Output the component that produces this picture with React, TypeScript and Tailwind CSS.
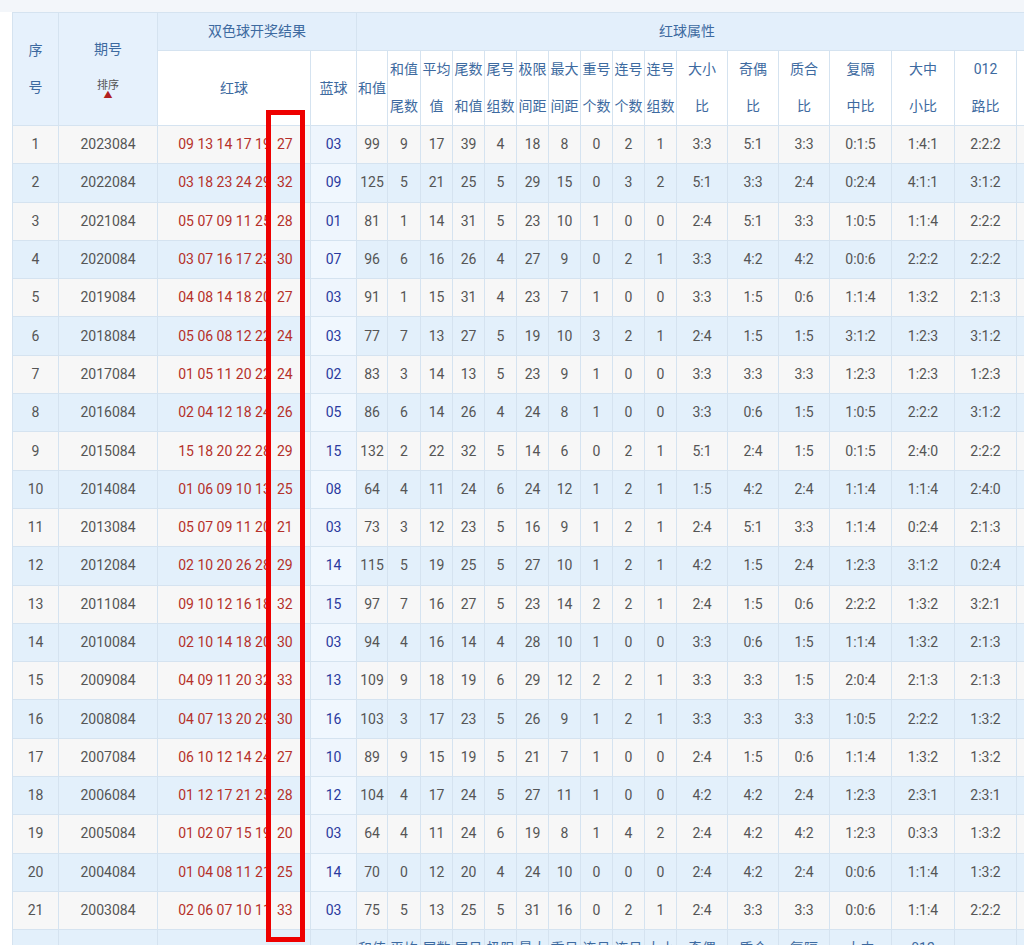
import React from "react";

const rows: string[] = [
"1 2023084 09_13_14_17_19 27 03 99 9 17 39 4 18 8 0 2 1 3:3 5:1 3:3 0:1:5 1:4:1 2:2:2",
"2 2022084 03_18_23_24_29 32 09 125 5 21 25 5 29 15 0 3 2 5:1 3:3 2:4 0:2:4 4:1:1 3:1:2",
"3 2021084 05_07_09_11_25 28 01 81 1 14 31 5 23 10 1 0 0 2:4 5:1 3:3 1:0:5 1:1:4 2:2:2",
"4 2020084 03_07_16_17_23 30 07 96 6 16 26 4 27 9 0 2 1 3:3 4:2 4:2 0:0:6 2:2:2 2:2:2",
"5 2019084 04_08_14_18_20 27 03 91 1 15 31 4 23 7 1 0 0 3:3 1:5 0:6 1:1:4 1:3:2 2:1:3",
"6 2018084 05_06_08_12_22 24 03 77 7 13 27 5 19 10 3 2 1 2:4 1:5 1:5 3:1:2 1:2:3 3:1:2",
"7 2017084 01_05_11_20_22 24 02 83 3 14 13 5 23 9 1 0 0 3:3 3:3 3:3 1:2:3 1:2:3 1:2:3",
"8 2016084 02_04_12_18_24 26 05 86 6 14 26 4 24 8 1 0 0 3:3 0:6 1:5 1:0:5 2:2:2 3:1:2",
"9 2015084 15_18_20_22_28 29 15 132 2 22 32 5 14 6 0 2 1 5:1 2:4 1:5 0:1:5 2:4:0 2:2:2",
"10 2014084 01_06_09_10_13 25 08 64 4 11 24 6 24 12 1 2 1 1:5 4:2 2:4 1:1:4 1:1:4 2:4:0",
"11 2013084 05_07_09_11_20 21 03 73 3 12 23 5 16 9 1 2 1 2:4 5:1 3:3 1:1:4 0:2:4 2:1:3",
"12 2012084 02_10_20_26_28 29 14 115 5 19 25 5 27 10 1 2 1 4:2 1:5 2:4 1:2:3 3:1:2 0:2:4",
"13 2011084 09_10_12_16_18 32 15 97 7 16 27 5 23 14 2 2 1 2:4 1:5 0:6 2:2:2 1:3:2 3:2:1",
"14 2010084 02_10_14_18_20 30 03 94 4 16 14 4 28 10 1 0 0 3:3 0:6 1:5 1:1:4 1:3:2 2:1:3",
"15 2009084 04_09_11_20_32 33 13 109 9 18 19 6 29 12 2 2 1 3:3 3:3 1:5 2:0:4 2:1:3 2:1:3",
"16 2008084 04_07_13_20_29 30 16 103 3 17 23 5 26 9 1 2 1 3:3 3:3 3:3 1:0:5 2:2:2 1:3:2",
"17 2007084 06_10_12_14_24 27 10 89 9 15 19 5 21 7 1 0 0 2:4 1:5 0:6 1:1:4 1:3:2 1:3:2",
"18 2006084 01_12_17_21_25 28 12 104 4 17 24 5 27 11 1 0 0 4:2 4:2 2:4 1:2:3 2:3:1 2:3:1",
"19 2005084 01_02_07_15_19 20 03 64 4 11 24 6 19 8 1 4 2 2:4 4:2 4:2 1:2:3 0:3:3 1:3:2",
"20 2004084 01_04_08_11_21 25 14 70 0 12 20 4 24 10 0 0 0 2:4 4:2 2:4 0:0:6 1:1:4 1:3:2",
"21 2003084 02_06_07_10_11 33 03 75 5 13 25 5 31 16 0 2 1 2:4 3:3 3:3 0:0:6 1:1:4 2:2:2",
];

const widths = [46, 99, 153, 46, 31, 33, 32, 32, 32, 32, 32, 32, 32, 32, 51, 51, 51, 62, 63, 62, 60];
const subHeads: [string, string][] = [
  ["和值", "尾数"], ["平均", "值"], ["尾数", "和值"], ["尾号", "组数"], ["极限", "间距"], ["最大", "间距"],
  ["重号", "个数"], ["连号", "个数"], ["连号", "组数"], ["大小", "比"], ["奇偶", "比"], ["质合", "比"],
  ["复隔", "中比"], ["大中", "小比"], ["012", "路比"], ["", ""],
];

const bd = "border border-[#d5e3f0]";

export default function App() {
  return (
    <div className="relative w-[1024px] h-[945px] overflow-hidden bg-white" style={{ fontFamily: "Roboto, 'Noto Sans CJK SC', sans-serif" }}>
      <div className="h-[12px] bg-[#f3f6fa]" />
      <div className="pl-[12px]">
        <table className="table-fixed border-collapse text-[14px] text-center" style={{ width: widths.reduce((a, b) => a + b, 0) }}>
          <colgroup>
            {widths.map((w, i) => <col key={i} style={{ width: w }} />)}
          </colgroup>
          <thead className="text-[#3d6aa0]">
            <tr className="h-[38px] bg-[#e3effb]">
              <th rowSpan={2} className={`${bd} font-normal leading-[37px] bg-[#e6f1fc]`}>序<br />号</th>
              <th rowSpan={2} className={`${bd} font-normal bg-[#e6f1fc]`}>
                <div>期号</div>
                <div className="mt-[20px] text-[11px] leading-none text-[#555]">排序</div>
                <div className="text-[#b02020] text-[9px] leading-none">▲</div>
              </th>
              <th colSpan={2} className={`${bd} font-normal`}>双色球开奖结果</th>
              <th colSpan={17} className={`${bd} font-normal`}>
                <div className="w-[660px]">红球属性</div>
              </th>
            </tr>
            <tr className="h-[75px] bg-white">
              <th className={`${bd} font-normal`}>红球</th>
              <th className={`${bd} font-normal`}>蓝球</th>
              <th className={`${bd} font-normal`}>和值</th>
              {subHeads.map(([a, b], i) => (
                <th key={i} className={`${bd} font-normal leading-[37px] whitespace-nowrap`}>{a}<br />{b}</th>
              ))}
            </tr>
          </thead>
          <tbody className="text-[#555]">
            {rows.map((r, ri) => {
              const p = r.split(" ");
              const odd = ri % 2 === 0;
              return (
                <tr key={ri} className={`h-[38.3px] ${odd ? "bg-[#f7f7f7]" : "bg-[#e3f0fb]"}`}>
                  <td className={bd}>{p[0]}</td>
                  <td className={bd}>{p[1]}</td>
                  <td className={`${bd} text-[#b5312a]`}>
                    <div className="flex pl-[17px] whitespace-nowrap">
                      <span className="w-[99px] overflow-hidden">{p[2].split("_").join(" ")}</span>
                      <span className="ml-[3px]">{p[3]}</span>
                    </div>
                  </td>
                  <td className={`${bd} text-[#2b3a9e] ${odd ? "bg-[#eef5fd]" : "bg-[#f0f7fe]"}`}>{p[4]}</td>
                  {p.slice(5).map((v, i) => <td key={i} className={bd}>{v}</td>)}
                  <td className={bd}></td>
                </tr>
              );
            })}
            <tr className="h-[75px] bg-[#e3f0fb] text-[#3d6aa0]">
              <td className={bd}></td><td className={bd}></td><td className={bd}></td><td className={bd}></td>
              <td className={`${bd} leading-[37px]`}>和值<br />&nbsp;</td>
              {subHeads.slice(1).map(([a, b], i) => (
                <td key={i} className={`${bd} leading-[37px] whitespace-nowrap`}>{a}<br />{b}</td>
              ))}
              <td className={bd}></td>
            </tr>
          </tbody>
        </table>
      </div>
      <div className="absolute left-[266px] top-[110px] w-[39px] h-[832px] border-[5px] border-[#ee0000]" />
    </div>
  );
}
